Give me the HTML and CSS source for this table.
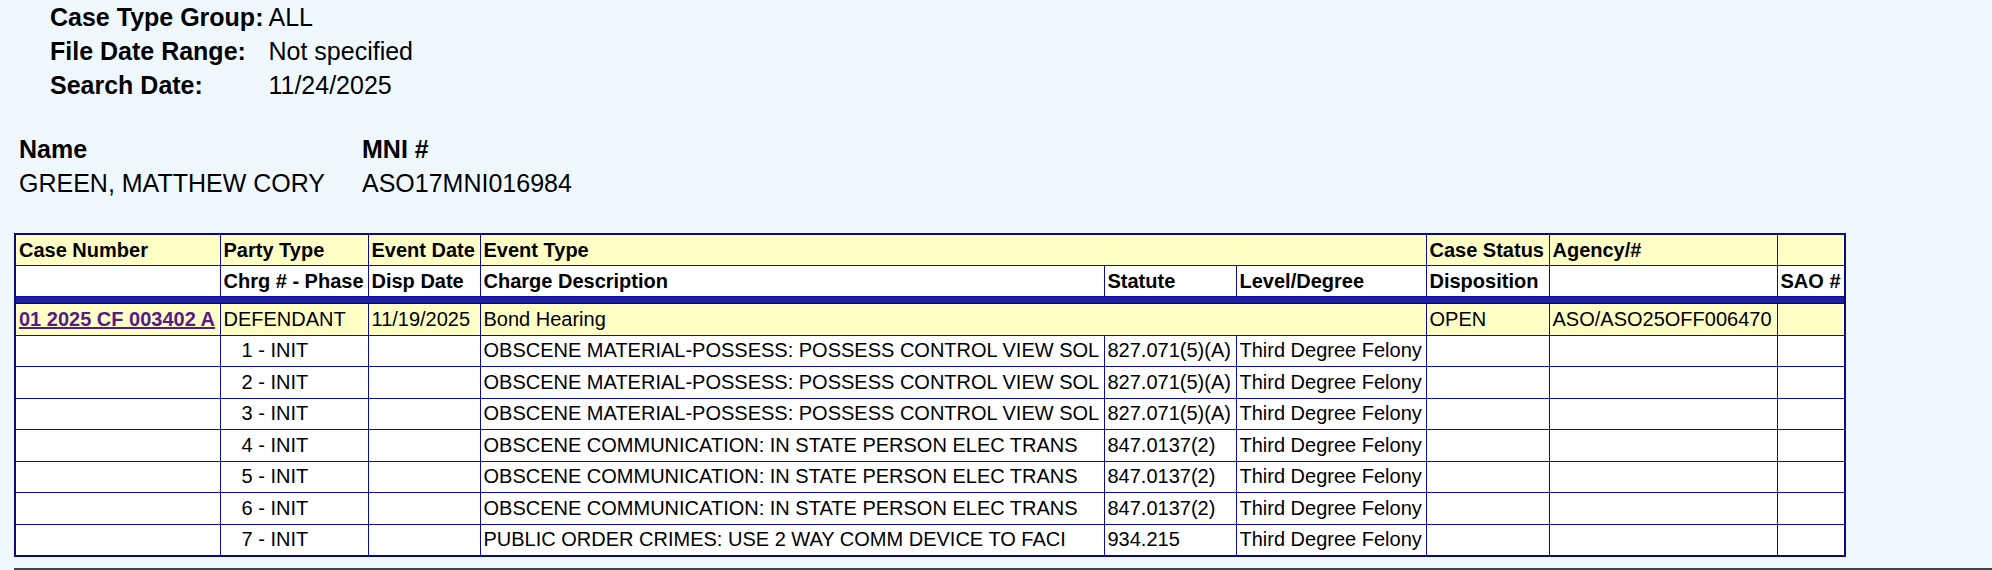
FILE: index.html
```html
<!DOCTYPE html>
<html>
<head>
<meta charset="utf-8">
<link rel="stylesheet" href="styles.css">
</head>
<body>
<div class="criteria">
  <div class="lbl">Case Type Group:</div><div class="val">ALL</div>
  <div class="lbl">File Date Range:</div><div class="val">Not specified</div>
  <div class="lbl">Search Date:</div><div class="val">11/24/2025</div>
</div>
<div class="person">
  <div class="plbl">Name</div><div class="plbl">MNI #</div>
  <div class="pval">GREEN, MATTHEW CORY</div><div class="pval">ASO17MNI016984</div>
</div>
<table class="cases">
  <colgroup>
    <col class="c1"><col class="c2"><col class="c3"><col class="c4"><col class="c5"><col class="c6"><col class="c7"><col class="c8"><col class="c9">
  </colgroup>
  <tr class="hdr yellow">
    <th>Case Number</th><th>Party Type</th><th>Event Date</th><th colspan="3">Event Type</th><th>Case Status</th><th>Agency/#</th><th></th>
  </tr>
  <tr class="hdr white">
    <th></th><th>Chrg # - Phase</th><th>Disp Date</th><th>Charge Description</th><th>Statute</th><th>Level/Degree</th><th>Disposition</th><th></th><th>SAO #</th>
  </tr>
  <tr class="bar"><td colspan="9"></td></tr>
  <tr class="row yellow">
    <td><a class="caselink" href="#">01 2025 CF 003402 A</a></td><td>DEFENDANT</td><td>11/19/2025</td><td colspan="3">Bond Hearing</td><td>OPEN</td><td>ASO/ASO25OFF006470</td><td></td>
  </tr>
  <tr class="row white">
    <td></td><td class="chrg">1 - INIT</td><td></td><td>OBSCENE MATERIAL-POSSESS: POSSESS CONTROL VIEW SOL</td><td>827.071(5)(A)</td><td>Third Degree Felony</td><td></td><td></td><td></td>
  </tr>
  <tr class="row white">
    <td></td><td class="chrg">2 - INIT</td><td></td><td>OBSCENE MATERIAL-POSSESS: POSSESS CONTROL VIEW SOL</td><td>827.071(5)(A)</td><td>Third Degree Felony</td><td></td><td></td><td></td>
  </tr>
  <tr class="row white">
    <td></td><td class="chrg">3 - INIT</td><td></td><td>OBSCENE MATERIAL-POSSESS: POSSESS CONTROL VIEW SOL</td><td>827.071(5)(A)</td><td>Third Degree Felony</td><td></td><td></td><td></td>
  </tr>
  <tr class="row white">
    <td></td><td class="chrg">4 - INIT</td><td></td><td>OBSCENE COMMUNICATION: IN STATE PERSON ELEC TRANS</td><td>847.0137(2)</td><td>Third Degree Felony</td><td></td><td></td><td></td>
  </tr>
  <tr class="row white">
    <td></td><td class="chrg">5 - INIT</td><td></td><td>OBSCENE COMMUNICATION: IN STATE PERSON ELEC TRANS</td><td>847.0137(2)</td><td>Third Degree Felony</td><td></td><td></td><td></td>
  </tr>
  <tr class="row white">
    <td></td><td class="chrg">6 - INIT</td><td></td><td>OBSCENE COMMUNICATION: IN STATE PERSON ELEC TRANS</td><td>847.0137(2)</td><td>Third Degree Felony</td><td></td><td></td><td></td>
  </tr>
  <tr class="row white">
    <td></td><td class="chrg">7 - INIT</td><td></td><td>PUBLIC ORDER CRIMES: USE 2 WAY COMM DEVICE TO FACI</td><td>934.215</td><td>Third Degree Felony</td><td></td><td></td><td></td>
  </tr>
</table>
<hr class="rule">
</body>
</html>
```
FILE: styles.css
```css
html, body {
  margin: 0;
  padding: 0;
  background: #f0f8ff;
  font-family: "Liberation Sans", Arial, sans-serif;
  color: #000;
}

.criteria {
  display: grid;
  grid-template-columns: max-content 1fr;
  column-gap: 5px;
  padding-left: 50px;
  font-size: 25px;
  line-height: 34px;
}
.criteria .lbl { font-weight: bold; }

.person {
  display: grid;
  grid-template-columns: 343px 1fr;
  padding-left: 19px;
  margin-top: 30px;
  font-size: 25px;
  line-height: 34px;
}
.person .plbl { font-weight: bold; }

.cases {
  margin: 33px 0 0 14px;
  border-collapse: collapse;
  table-layout: fixed;
  width: 1830px;
  border: 2px solid #0a0a7a;
  font-size: 20px;
}
.cases .c1 { width: 205px; }
.cases .c2 { width: 148px; }
.cases .c3 { width: 112px; }
.cases .c4 { width: 624px; }
.cases .c5 { width: 132px; }
.cases .c6 { width: 190px; }
.cases .c7 { width: 123px; }
.cases .c8 { width: 228px; }
.cases .c9 { width: 68px; }

.cases th, .cases td {
  border: 1px solid #0c0ca4;
  padding: 0 3px;
  text-align: left;
  white-space: nowrap;
  overflow: hidden;
  line-height: 23px;
}
.cases th { font-weight: bold; }
.cases .hdr th { height: 30px; }
.cases .row td { height: 30.5px; }
.cases .yellow th, .cases .yellow td { background: #ffffc6; }
.cases .white th, .cases .white td { background: #ffffff; }
.cases .bar td {
  height: 6px;
  padding: 0;
  background: #1e1ea0;
  border-color: #0a0a80;
  line-height: 0;
}
.cases .chrg { padding-left: 21px; }

.caselink {
  color: #551a8b;
  font-weight: bold;
}

.rule {
  margin: 11px 0 0 14px;
  border: 0;
  border-top: 2px solid #444;
  height: 0;
}
```
